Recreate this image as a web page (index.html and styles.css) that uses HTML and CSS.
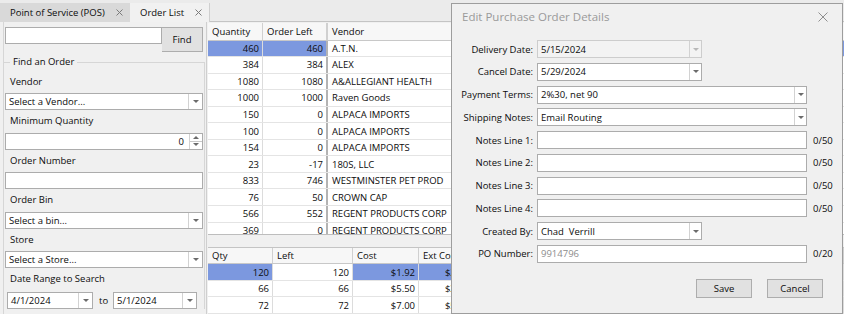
FILE: index.html
```html
<!DOCTYPE html>
<html lang="en">
<head>
    <meta charset="UTF-8">
    <meta name="viewport" content="width=device-width, initial-scale=1.0">
    <title>Order List</title>
    <link rel="stylesheet" href="styles.css">
</head>
<body>
<div class="app">
    <div class="tabstrip">
        <div class="tab">Point of Service (POS)<svg class="tab-x" width="7" height="7" viewBox="0 0 7 7"><path d="M0.5 0.5L6.5 6.5M6.5 0.5L0.5 6.5"/></svg></div>
        <div class="tab active">Order List<svg class="tab-x" width="7" height="7" viewBox="0 0 7 7"><path d="M0.5 0.5L6.5 6.5M6.5 0.5L0.5 6.5"/></svg></div>
    </div>

    <div class="main">
        <aside class="side">
            <div class="search">
                <div class="box search-input"></div>
                <div class="btn find">Find</div>
            </div>
            <fieldset class="group">
                <legend>Find an Order</legend>
                <div class="lbl">Vendor</div>
                <div class="box combo"><span class="val">Select a Vendor...</span><span class="drop"><i class="tri"></i></span></div>
                <div class="lbl">Minimum Quantity</div>
                <div class="box spin"><span class="val num-val">0</span><span class="spin-btns"><i class="tri up"></i><i class="tri"></i></span></div>
                <div class="lbl">Order Number</div>
                <div class="box"></div>
                <div class="lbl">Order Bin</div>
                <div class="box combo"><span class="val">Select a bin...</span><span class="drop"><i class="tri"></i></span></div>
                <div class="lbl">Store</div>
                <div class="box combo"><span class="val">Select a Store...</span><span class="drop"><i class="tri"></i></span></div>
                <div class="lbl">Date Range to Search</div>
                <div class="dates">
                    <div class="box combo date-from"><span class="val">4/1/2024</span><span class="drop"><i class="tri"></i></span></div>
                    <span class="to">to</span>
                    <div class="box combo date-to"><span class="val">5/1/2024</span><span class="drop"><i class="tri"></i></span></div>
                </div>
            </fieldset>
        </aside>

        <section class="grids">
            <div class="grid grid-top">
                <div class="hrow">
                    <div class="cell w-qty">Quantity</div>
                    <div class="cell w-left frozen">Order Left</div>
                    <div class="cell w-vendor">Vendor</div>
                    <div class="cell w-date">Order Date</div>
                    <div class="cell w-bin">Bin</div>
                    <div class="cell w-store">Store</div>
                </div>
                <div class="row selected">
                    <div class="cell w-qty num sel">460</div>
                    <div class="cell w-left frozen num sel">460</div>
                    <div class="cell w-vendor">A.T.N.</div>
                    <div class="cell w-date sel"></div>
                    <div class="cell w-bin sel"></div>
                    <div class="cell w-store sel"></div>
                </div>
                <div class="row"><div class="cell w-qty num">384</div><div class="cell w-left frozen num">384</div><div class="cell w-vendor">ALEX</div><div class="cell w-date"></div><div class="cell w-bin"></div><div class="cell w-store"></div></div>
                <div class="row"><div class="cell w-qty num">1080</div><div class="cell w-left frozen num">1080</div><div class="cell w-vendor">A&amp;ALLEGIANT HEALTH</div><div class="cell w-date"></div><div class="cell w-bin"></div><div class="cell w-store"></div></div>
                <div class="row"><div class="cell w-qty num">1000</div><div class="cell w-left frozen num">1000</div><div class="cell w-vendor">Raven Goods</div><div class="cell w-date"></div><div class="cell w-bin"></div><div class="cell w-store"></div></div>
                <div class="row"><div class="cell w-qty num">150</div><div class="cell w-left frozen num">0</div><div class="cell w-vendor">ALPACA IMPORTS</div><div class="cell w-date"></div><div class="cell w-bin"></div><div class="cell w-store"></div></div>
                <div class="row"><div class="cell w-qty num">100</div><div class="cell w-left frozen num">0</div><div class="cell w-vendor">ALPACA IMPORTS</div><div class="cell w-date"></div><div class="cell w-bin"></div><div class="cell w-store"></div></div>
                <div class="row"><div class="cell w-qty num">154</div><div class="cell w-left frozen num">0</div><div class="cell w-vendor">ALPACA IMPORTS</div><div class="cell w-date"></div><div class="cell w-bin"></div><div class="cell w-store"></div></div>
                <div class="row"><div class="cell w-qty num">23</div><div class="cell w-left frozen num">-17</div><div class="cell w-vendor">180S, LLC</div><div class="cell w-date"></div><div class="cell w-bin"></div><div class="cell w-store"></div></div>
                <div class="row"><div class="cell w-qty num">833</div><div class="cell w-left frozen num">746</div><div class="cell w-vendor">WESTMINSTER PET PROD</div><div class="cell w-date"></div><div class="cell w-bin"></div><div class="cell w-store"></div></div>
                <div class="row"><div class="cell w-qty num">76</div><div class="cell w-left frozen num">50</div><div class="cell w-vendor">CROWN CAP</div><div class="cell w-date"></div><div class="cell w-bin"></div><div class="cell w-store"></div></div>
                <div class="row"><div class="cell w-qty num">566</div><div class="cell w-left frozen num">552</div><div class="cell w-vendor">REGENT PRODUCTS CORP</div><div class="cell w-date"></div><div class="cell w-bin"></div><div class="cell w-store"></div></div>
                <div class="row"><div class="cell w-qty num">369</div><div class="cell w-left frozen num">0</div><div class="cell w-vendor">REGENT PRODUCTS CORP</div><div class="cell w-date"></div><div class="cell w-bin"></div><div class="cell w-store"></div></div>
            </div>

            <div class="grid grid-bottom">
                <div class="hrow">
                    <div class="cell b-qty">Qty</div>
                    <div class="cell b-left">Left</div>
                    <div class="cell b-cost">Cost</div>
                    <div class="cell b-ext">Ext Cost</div>
                    <div class="cell b-rest">Item</div>
                </div>
                <div class="row">
                    <div class="cell b-qty num sel">120</div>
                    <div class="cell b-left num">120</div>
                    <div class="cell b-cost num sel">$1.92</div>
                    <div class="cell b-ext num sel">$230.40</div>
                    <div class="cell b-rest sel"></div>
                </div>
                <div class="row"><div class="cell b-qty num">66</div><div class="cell b-left num">66</div><div class="cell b-cost num">$5.50</div><div class="cell b-ext num">$363.00</div><div class="cell b-rest"></div></div>
                <div class="row"><div class="cell b-qty num">72</div><div class="cell b-left num">72</div><div class="cell b-cost num">$7.00</div><div class="cell b-ext num">$504.00</div><div class="cell b-rest"></div></div>
            </div>
        </section>
    </div>

    <div class="dialog">
        <div class="dlg-title">
            <span>Edit Purchase Order Details</span>
            <svg class="dlg-close" width="10" height="10" viewBox="0 0 10 10"><path d="M0.5 0.5L9.5 9.5M9.5 0.5L0.5 9.5"/></svg>
        </div>
        <div class="dlg-form">
            <div class="frow">
                <span class="flabel">Delivery Date:</span>
                <div class="field short combo disabled"><span class="val">5/15/2024</span><span class="drop"><i class="tri"></i></span></div>
            </div>
            <div class="frow">
                <span class="flabel">Cancel Date:</span>
                <div class="field short combo"><span class="val">5/29/2024</span><span class="drop"><i class="tri"></i></span></div>
            </div>
            <div class="frow">
                <span class="flabel">Payment Terms:</span>
                <div class="field long combo"><span class="val">2%30, net 90</span><span class="drop"><i class="tri"></i></span></div>
            </div>
            <div class="frow">
                <span class="flabel">Shipping Notes:</span>
                <div class="field long combo"><span class="val">Email Routing</span><span class="drop"><i class="tri"></i></span></div>
            </div>
            <div class="frow">
                <span class="flabel">Notes Line 1:</span>
                <div class="field long"></div>
                <span class="count">0/50</span>
            </div>
            <div class="frow">
                <span class="flabel">Notes Line 2:</span>
                <div class="field long"></div>
                <span class="count">0/50</span>
            </div>
            <div class="frow">
                <span class="flabel">Notes Line 3:</span>
                <div class="field long"></div>
                <span class="count">0/50</span>
            </div>
            <div class="frow">
                <span class="flabel">Notes Line 4:</span>
                <div class="field long"></div>
                <span class="count">0/50</span>
            </div>
            <div class="frow">
                <span class="flabel">Created By:</span>
                <div class="field short combo"><span class="val">Chad  Verrill</span><span class="drop"><i class="tri"></i></span></div>
            </div>
            <div class="frow">
                <span class="flabel">PO Number:</span>
                <div class="field long"><span class="val hint">9914796</span></div>
                <span class="count">0/20</span>
            </div>
        </div>
        <div class="dlg-buttons">
            <div class="btn dbtn">Save</div>
            <div class="btn dbtn">Cancel</div>
        </div>
    </div>
</div>
</body>
</html>
```

FILE: styles.css
```css
* { box-sizing: border-box; }
body { margin: 0; background: #f0f0f0; font-family: "Open Sans", "Noto Sans", sans-serif; font-size: 9.5px; font-weight: 500; color: #0c0c0c; overflow: hidden; }
.app { position: relative; width: 844px; height: 314px; overflow: hidden; }

/* tabs */
.tabstrip { display: flex; height: 22px; padding-top: 3px; background: #ebebeb; border-bottom: 1px solid #c4c4c4; }
.tab { display: flex; align-items: center; justify-content: space-between; height: 19px; padding: 0 7px 0 10px; background: #d9d9d9; }
.tab:first-child { width: 130px; }
.tab.active { width: 80px; background: #f1f1f1; border-right: 1px solid #cfcfcf; }
.tab-x path { stroke: #7a7a7a; stroke-width: 1; fill: none; }

.main { display: flex; height: 292px; }

/* left panel */
.side { width: 204px; margin-left: 3px; padding: 4.5px 3px 0 1px; border-left: 1px solid #d6d6d6; border-right: 1px solid #cfcfcf; flex-shrink: 0; }
.search { display: flex; height: 25px; }
.search-input { flex: 1; height: 25px; }
.btn { display: flex; align-items: center; justify-content: center; background: #e1e1e1; border: 1px solid #adadad; }
.find { width: 41px; height: 25px; border-left: none; }

.group { margin: 3.5px -2px 0; padding: 1.5px 1px 0; border: 1px solid #d6d6d6; border-bottom: none; min-width: 0; }
.group legend { margin-left: 5px; padding: 0 3px; line-height: 14px; }
.lbl { height: 22.5px; line-height: 22.5px; padding-left: 5px; }

.box { display: flex; align-items: center; height: 17px; background: #fff; border: 1px solid #acacac; }
.val { flex: 1; padding-left: 3px; white-space: pre; overflow: hidden; }
.num-val { text-align: right; padding-right: 5px; }
.drop { display: flex; align-items: center; justify-content: center; width: 14px; height: 100%; border-left: 1px solid #d2d2d2; }
.tri { display: block; width: 0; height: 0; border-left: 3px solid transparent; border-right: 3px solid transparent; border-top: 3px solid #6b6b6b; }
.tri.up { border-top: none; border-bottom: 3px solid #6b6b6b; }
.spin-btns { display: flex; flex-direction: column; align-items: center; justify-content: space-around; width: 13px; height: 100%; border-left: 1px solid #d2d2d2; background: linear-gradient(#fff 7px, #c8c8c8 7px, #c8c8c8 8px, #fff 8px); }

.dates { display: flex; align-items: center; margin-top: 1.5px; padding-left: 2px; }
.date-from { width: 86px; }
.date-to { width: 84px; }
.to { width: 20px; padding-left: 6px; }

/* grids */
.grids { flex: 1; display: flex; flex-direction: column; padding-left: 1px; min-width: 0; }
.grid { overflow: hidden; }
.grid-top { height: 212.5px; border-bottom: 1px solid #bdbdbd; margin-top: 0.5px; }
.grid-bottom { margin-top: 12px; border-top: 1px solid #c4c4c4; }

.hrow, .row { display: flex; }
.hrow { height: 18px; background: #f7f7f7; border-bottom: 1px solid #c8c8c8; }
.grid-bottom .hrow { height: 16.6px; }
.row { height: 16.55px; background: #fff; border-bottom: 1px solid #e4e4e4; }
.grid-bottom .row { height: 16.67px; }

.cell { display: flex; align-items: center; flex-shrink: 0; padding: 0 3px 0 4px; white-space: nowrap; overflow: hidden; border-right: 1px solid #dcdcdc; }
.hrow .cell { border-right-color: #d0d0d0; }
.num { justify-content: flex-end; }
.sel { background: #7c98df; }
.frozen { border-right: 2px solid #b3b3b3; }

.w-qty { width: 55px; }
.w-left { width: 65px; }
.w-vendor { width: 192px; }
.w-date { width: 130px; }
.w-bin { width: 100px; }
.w-store { width: 100px; }

.b-qty { width: 65px; }
.b-left { width: 80px; }
.b-cost { width: 66px; }
.b-ext { width: 65px; }
.b-rest { width: 360px; }

/* dialog */
.dialog { position: absolute; left: 451px; top: 3px; width: 392px; height: 311px; background: #f0f0f0; border: 1px solid #9d9d9d; }
.dlg-title { display: flex; align-items: center; justify-content: space-between; height: 25px; padding: 0 14px 0 10px; color: #9a9a9a; font-size: 11.5px; font-weight: 400; }
.dlg-close path { stroke: #8e8e8e; stroke-width: 1; fill: none; }
.dlg-form { padding-top: 11px; }
.frow { display: flex; align-items: center; height: 18px; margin-bottom: 4.75px; }
.flabel { width: 81px; margin-right: 4px; text-align: right; }
.field { display: flex; align-items: center; height: 18px; background: #fff; border: 1px solid #acacac; }
.field .drop { width: 12px; }
.field.disabled { background: #f3f3f3; border-color: #cdcdcd; }
.field.disabled .tri { border-top-color: #b8b8b8; }
.short { width: 165px; }
.long { width: 270px; }
.count { margin-left: 6px; }
.hint { color: #8c8c8c; font-weight: 400; }
.dlg-buttons { display: flex; justify-content: flex-end; gap: 15px; margin-top: 16px; padding-right: 19px; }
.dbtn { width: 56px; height: 19px; }
```
